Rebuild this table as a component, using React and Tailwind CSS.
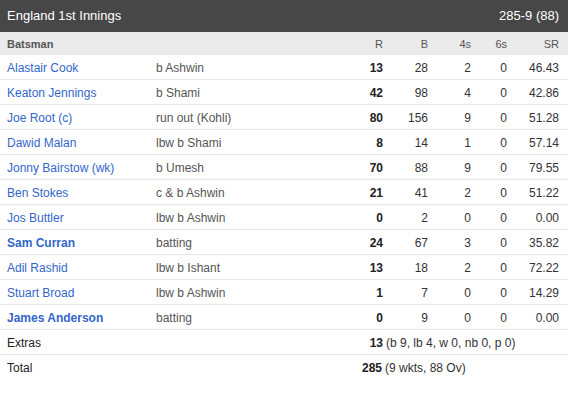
import React from 'react';

const batsmen = [
  { name: 'Alastair Cook', how: 'b Ashwin', r: 13, b: 28, f: 2, s: 0, sr: '46.43' },
  { name: 'Keaton Jennings', how: 'b Shami', r: 42, b: 98, f: 4, s: 0, sr: '42.86' },
  { name: 'Joe Root (c)', how: 'run out (Kohli)', r: 80, b: 156, f: 9, s: 0, sr: '51.28' },
  { name: 'Dawid Malan', how: 'lbw b Shami', r: 8, b: 14, f: 1, s: 0, sr: '57.14' },
  { name: 'Jonny Bairstow (wk)', how: 'b Umesh', r: 70, b: 88, f: 9, s: 0, sr: '79.55' },
  { name: 'Ben Stokes', how: 'c & b Ashwin', r: 21, b: 41, f: 2, s: 0, sr: '51.22' },
  { name: 'Jos Buttler', how: 'lbw b Ashwin', r: 0, b: 2, f: 0, s: 0, sr: '0.00' },
  { name: 'Sam Curran', how: 'batting', r: 24, b: 67, f: 3, s: 0, sr: '35.82', notOut: true },
  { name: 'Adil Rashid', how: 'lbw b Ishant', r: 13, b: 18, f: 2, s: 0, sr: '72.22' },
  { name: 'Stuart Broad', how: 'lbw b Ashwin', r: 1, b: 7, f: 0, s: 0, sr: '14.29' },
  { name: 'James Anderson', how: 'batting', r: 0, b: 9, f: 0, s: 0, sr: '0.00', notOut: true },
];

function App() {
  return (
    <div className="w-[568px] bg-white text-[12px] text-[#333]" style={{ fontFamily: '"Liberation Sans", Arial, sans-serif' }}>
      {/* Innings header */}
      <div className="flex items-center justify-between h-[32px] bg-[#474747] text-white text-[13px] pl-[7px] pr-[9px]">
        <span>England 1st Innings</span>
        <span>285-9 (88)</span>
      </div>

      {/* Column titles */}
      <div className="flex items-center h-[23px] bg-[#ebebeb] text-[#555] text-[11px] pl-[7px] pt-px">
        <div className="w-[149px] font-bold">Batsman</div>
        <div className="w-[187px]"></div>
        <div className="w-[40px] text-right">R</div>
        <div className="w-[45px] text-right">B</div>
        <div className="w-[43px] text-right">4s</div>
        <div className="w-[36px] text-right">6s</div>
        <div className="w-[52px] text-right">SR</div>
      </div>

      {/* Batsmen rows */}
      {batsmen.map((p, i) => (
        <div key={i} className="flex items-center h-[25px] border-b border-[#e6e6e6] pl-[7px] pt-px">
          <div className={`w-[149px] text-[#3366cc] ${p.notOut ? 'font-bold' : ''}`}>{p.name}</div>
          <div className="w-[187px] text-[#555]">{p.how}</div>
          <div className="w-[40px] text-right font-bold text-[#222]">{p.r}</div>
          <div className="w-[45px] text-right">{p.b}</div>
          <div className="w-[43px] text-right">{p.f}</div>
          <div className="w-[36px] text-right">{p.s}</div>
          <div className="w-[52px] text-right">{p.sr}</div>
        </div>
      ))}

      {/* Extras */}
      <div className="flex items-center h-[25px] border-b border-[#e6e6e6] pl-[7px] pt-px">
        <div className="w-[336px] text-[#222]">Extras</div>
        <div className="w-[40px] text-right font-bold text-[#222]">13</div>
        <div className="pl-[3px]">(b 9, lb 4, w 0, nb 0, p 0)</div>
      </div>

      {/* Total */}
      <div className="flex items-center h-[25px] pl-[7px] pt-px">
        <div className="w-[336px] text-[#222]">Total</div>
        <div className="w-[39px] text-right font-bold text-[#222]">285</div>
        <div className="pl-[3px]">(9 wkts, 88 Ov)</div>
      </div>
    </div>
  );
}

export default App;
